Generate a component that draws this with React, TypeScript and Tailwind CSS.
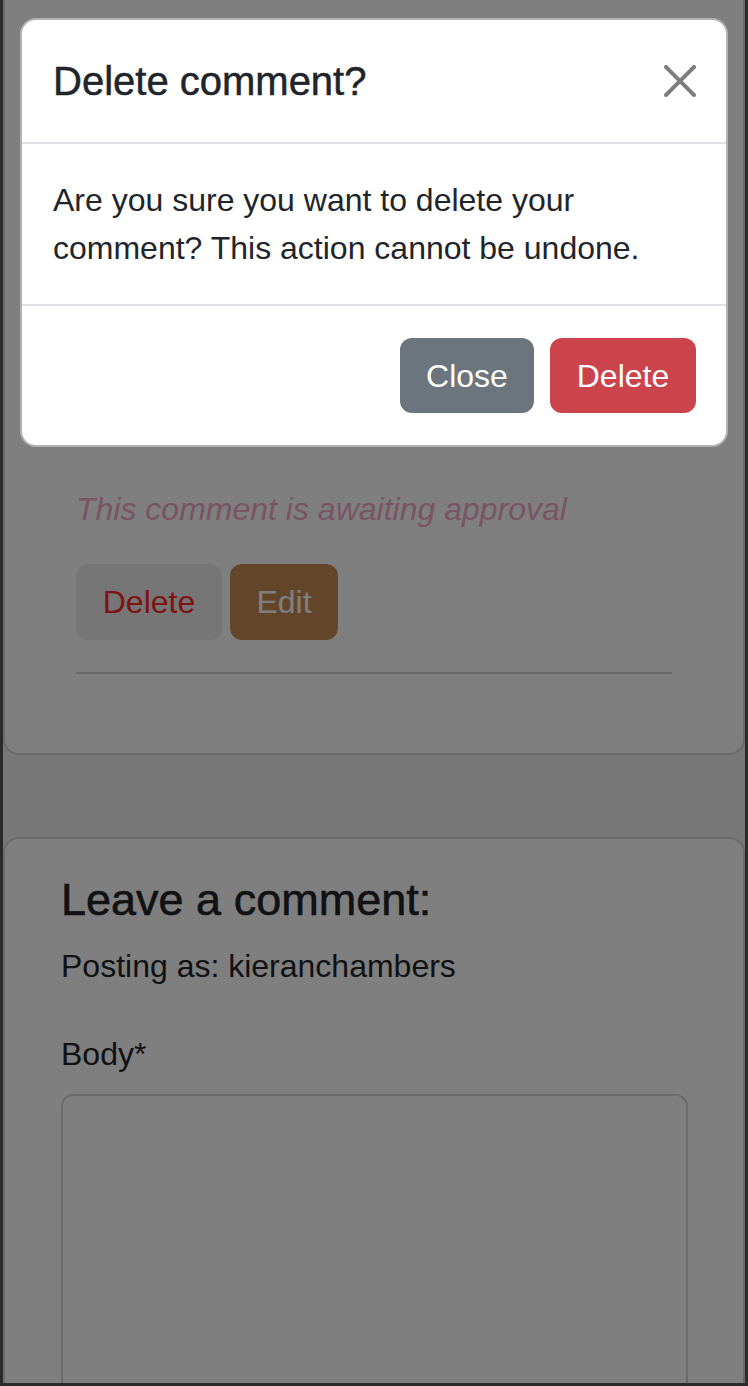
import React from "react";

export default function App() {
  return (
    <div className="w-[748px] h-[1386px] overflow-hidden bg-[#2b2b2b] pl-[3px] pr-[3px] pb-[3px] font-['Liberation_Sans',Arial,sans-serif] text-[#212529]">
      <div className="relative h-full overflow-hidden bg-[#eeeeee]">
        {/* Comment card */}
        <div className="bg-white border-x-2 border-b-2 border-[#d6d6d6] rounded-b-[16px] pt-[485px] pl-[71px] pr-[71px] pb-[79px]">
          <p className="italic text-[32px] leading-[48px] text-[#f2a8c4]">
            This comment is awaiting approval
          </p>
          <div className="flex gap-[8px] mt-[31px]">
            <button className="h-[76px] w-[146px] rounded-[12px] bg-[#ececec] text-[32px] leading-[48px] text-[#ff2626]">
              Delete
            </button>
            <button className="h-[76px] w-[108px] rounded-[12px] bg-[#c68c52] text-[32px] leading-[48px] text-white">
              Edit
            </button>
          </div>
          <hr className="mt-[32px] border-0 border-t-2 border-[#d2d2d2]" />
        </div>

        {/* Leave a comment card */}
        <div className="mt-[82px] bg-white border-2 border-[#d6d6d6] rounded-[16px] pl-[56px] pr-[55px] pt-[34px]">
          <h4 className="text-[45px] leading-[54px] font-medium [-webkit-text-stroke:0.6px]">
            Leave a comment:
          </h4>
          <p className="mt-[15px] text-[32px] leading-[48px]">Posting as: kieranchambers</p>
          <label className="block mt-[40px] text-[32px] leading-[48px]">Body*</label>
          <textarea className="mt-[16px] block w-full h-[500px] border-2 border-[#d4d8dd] rounded-[12px] bg-white resize-none" />
        </div>

        {/* Backdrop */}
        <div className="absolute inset-0 bg-black/50" />

        {/* Modal */}
        <div className="absolute left-[17px] right-[17px] top-[18px] bg-white border-2 border-black/30 rounded-[16px] overflow-hidden">
          <div className="flex items-center justify-between pl-[31px] pr-[22px] py-[31px] border-b-2 border-[#dee2e6]">
            <h5 className="text-[40px] leading-[60px] font-medium [-webkit-text-stroke:0.5px]">
              Delete comment?
            </h5>
            <button className="w-[48px] h-[48px] flex items-center justify-center opacity-50" aria-label="Close">
              <svg width="32" height="32" viewBox="0 0 16 16" fill="#000">
                <path d="M.293.293a1 1 0 0 1 1.414 0L8 6.586 14.293.293a1 1 0 1 1 1.414 1.414L9.414 8l6.293 6.293a1 1 0 0 1-1.414 1.414L8 9.414l-6.293 6.293a1 1 0 0 1-1.414-1.414L6.586 8 .293 1.707a1 1 0 0 1 0-1.414z" />
              </svg>
            </button>
          </div>
          <div className="px-[31px] py-[32px] border-b-2 border-[#dee2e6]">
            <p className="text-[32px] leading-[48px]">
              Are you sure you want to delete your comment? This action cannot be undone.
            </p>
          </div>
          <div className="flex justify-end gap-[16px] pt-[32px] pb-[32px] pr-[30px]">
            <button className="h-[75px] w-[134px] rounded-[12px] bg-[#6c757d] text-white text-[32px] leading-[48px]">
              Close
            </button>
            <button className="h-[75px] w-[146px] rounded-[12px] bg-[#cc444b] text-white text-[32px] leading-[48px]">
              Delete
            </button>
          </div>
        </div>
      </div>
    </div>
  );
}
